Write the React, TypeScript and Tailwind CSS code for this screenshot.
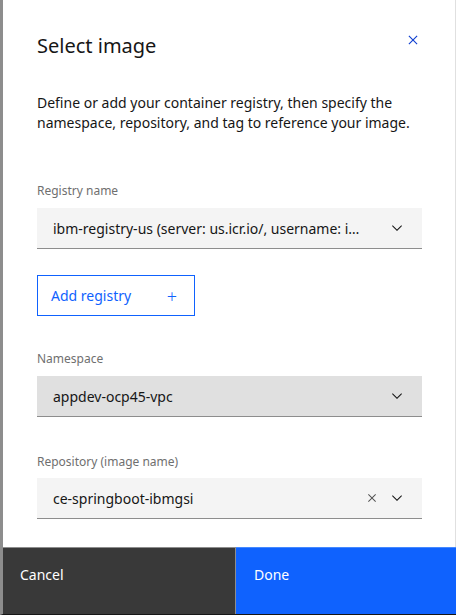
import React from "react";

const ChevronDown = () => (
  <svg width="16" height="16" viewBox="0 0 16 16" fill="#161616">
    <path d="M8 11L3 6 3.7 5.3 8 9.6 12.3 5.3 13 6z" />
  </svg>
);

const Close = ({ color = "#161616", size = 16 }: { color?: string; size?: number }) => (
  <svg width={size} height={size} viewBox="0 0 16 16" fill={color}>
    <path d="M12 4.7L11.3 4 8 7.3 4.7 4 4 4.7 7.3 8 4 11.3 4.7 12 8 8.7 11.3 12 12 11.3 8.7 8z" />
  </svg>
);

const Select = ({
  value,
  bg,
  clearable,
}: {
  value: string;
  bg: string;
  clearable?: boolean;
}) => (
  <div
    className={`h-[41px] flex items-center border-b border-[#8d8d8d] pl-4 pr-[17px] ${bg}`}
  >
    <span className="flex-1 whitespace-nowrap text-[14px] text-[#161616]">{value}</span>
    {clearable && (
      <span className="mr-[9px] flex items-center">
        <Close color="#525252" />
      </span>
    )}
    <ChevronDown />
  </div>
);

const App: React.FC = () => {
  return (
    <div
      className="w-[456px] h-[615px] flex flex-col bg-white border-l-[3px] border-[#8d8d8d] border-b border-b-[#161616]"
      style={{ fontFamily: '"Noto Sans", sans-serif' }}
    >
      <div className="flex-1 flex flex-col pl-[34px] pr-[33px] border-r border-[#e0e0e0]">
        {/* header */}
        <div className="flex justify-between pt-[32px]">
          <h1 className="text-[20px] leading-[28px] text-[#161616]">Select image</h1>
          <button className="mt-[-1px] h-[16px] flex items-start">
            <Close color="#0f3fd0" size={18} />
          </button>
        </div>

        <p className="mt-[33px] text-[14px] leading-[20px] text-[#161616]">
          Define or add your container registry, then specify the namespace,
          repository, and tag to reference your image.
        </p>

        {/* registry */}
        <label className="mt-[50px] mb-[9px] text-[12px] leading-[16px] text-[#6f6f6f]">
          Registry name
        </label>
        <Select
          value="ibm-registry-us (server: us.icr.io/, username: i…"
          bg="bg-[#f4f4f4]"
        />

        <button className="mt-[26px] w-[158px] h-[41px] border border-[#0f62fe] flex items-center justify-between pl-[13px] pr-[17px] text-[14px] text-[#0f62fe]">
          <span>Add registry</span>
          <span className="text-[18px] leading-none font-light">+</span>
        </button>

        {/* namespace */}
        <label className="mt-[35px] mb-[9px] text-[12px] leading-[16px] text-[#6f6f6f]">
          Namespace
        </label>
        <Select value="appdev-ocp45-vpc" bg="bg-[#e0e0e0]" />

        {/* repository */}
        <label className="mt-[37px] mb-[8px] text-[12px] leading-[16px] text-[#6f6f6f]">
          Repository (image name)
        </label>
        <Select value="ce-springboot-ibmgsi" bg="bg-[#f4f4f4]" clearable />
      </div>

      {/* footer */}
      <div className="h-[67px] flex">
        <button className="w-[233px] bg-[#393939] border-t border-r border-[#8d8d8d] text-left pl-[17px] pb-[13px] text-[14px] text-white">
          Cancel
        </button>
        <button className="flex-1 bg-[#0f62fe] border-t border-[#4589ff] text-left pl-[18px] pb-[13px] text-[14px] text-white">
          Done
        </button>
      </div>
    </div>
  );
};

export default App;
